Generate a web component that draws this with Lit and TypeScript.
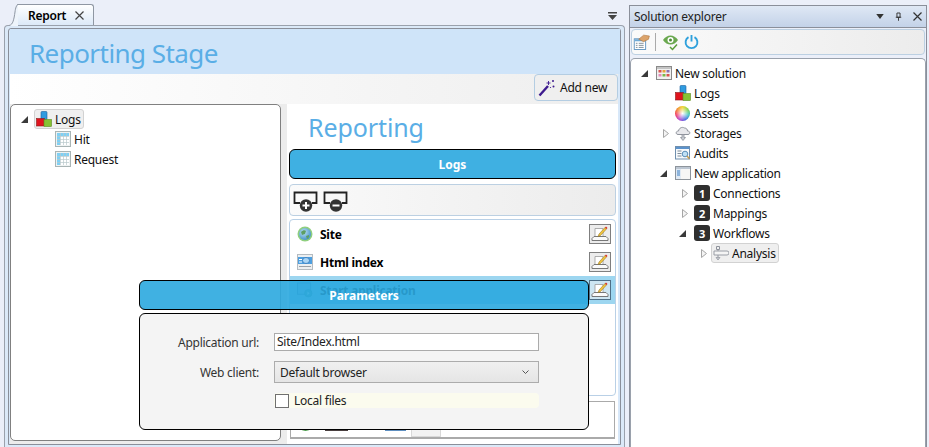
import { LitElement, html, css, TemplateResult } from "lit";
import { customElement } from "lit/decorators.js";

const blocks = html`<svg class="ic" width="16" height="16" viewBox="0 0 16 16">
  <rect x="5" y="0.500" width="6" height="8" rx="1" fill="#2f9be0" stroke="#1b5f9e" stroke-width=".6"/>
  <rect x="0.500" y="7.500" width="8" height="7.500" fill="#e0141e" stroke="#8c1a1a" stroke-width=".6"/>
  <rect x="8" y="8.500" width="7.500" height="7" fill="#86c232" stroke="#5a8a20" stroke-width=".6"/>
</svg>`;

const table = html`<svg class="ic" width="16" height="16" viewBox="0 0 16 16">
  <rect x="0.500" y="0.500" width="15" height="15" fill="#eef2f2" stroke="#a9b5b5"/>
  <rect x="2" y="2" width="12" height="12" fill="#fff"/>
  <rect x="2" y="2" width="12" height="3" fill="#7fd0f4"/>
  <rect x="2" y="2" width="3" height="12" fill="#7fd0f4"/>
  <path d="M2 5.500h12M2 8.500h12M2 11.500h12M5.500 2v12M8.500 2v12M11.500 2v12" stroke="#b9c8cb" stroke-width=".7" fill="none"/>
</svg>`;

const solution = html`<svg class="ic" width="16" height="16" viewBox="0 0 16 16">
  <rect x="0.500" y="1.500" width="15" height="13" fill="#f1f1f1" stroke="#8a8a8a"/>
  <rect x="1" y="2" width="14" height="2" fill="#c4c4c4"/>
  <rect x="2.500" y="5" width="3" height="2.500" fill="#d9534f"/><rect x="6.500" y="5" width="3" height="2.500" fill="#e9a23b"/><rect x="10.500" y="5" width="3" height="2.500" fill="#8a6fb0"/>
  <rect x="2.500" y="9" width="3" height="2.500" fill="#e58ab8"/><rect x="6.500" y="9" width="3" height="2.500" fill="#7ab648"/><rect x="10.500" y="9" width="3" height="2.500" fill="#d9534f"/>
</svg>`;

const cloud = html`<svg class="ic" width="16" height="16" viewBox="0 0 16 16">
  <path d="M3 9.500C.5 9.500.5 6 3.500 6 4 3 7 1.500 9.500 3c2 0 3 1.500 3 3 3 0 3 3.500.5 3.500z" fill="#e8e8ec" stroke="#8f939c"/>
  <path d="M7 9.500v3H5.500L8 15.500l2.500-3H9v-3z" fill="#c9ccd2" stroke="#8f939c" stroke-width=".8"/>
</svg>`;

const audits = html`<svg class="ic" width="16" height="16" viewBox="0 0 16 16">
  <rect x="0.500" y="1.500" width="14" height="12.500" fill="#f7fafc" stroke="#6f8fae"/>
  <rect x="1" y="2" width="13" height="2" fill="#5c93cc"/>
  <path d="M2.500 6h4M2.500 8.500h4M2.500 11h4" stroke="#7d8b99"/>
  <circle cx="10" cy="9" r="2.800" fill="#bfe0f5" stroke="#5b8fb8"/>
  <path d="M12 11l2.500 2.800" stroke="#c59a4a" stroke-width="1.500"/>
</svg>`;

const app = html`<svg class="ic" width="16" height="16" viewBox="0 0 16 16">
  <rect x="0.500" y="1.500" width="15" height="13" fill="#f6f6f6" stroke="#8d949c"/>
  <rect x="1" y="2" width="14" height="2" fill="#bcc6d2"/>
  <rect x="1" y="4" width="5" height="10" fill="#dfe9f4"/>
  <path d="M2 6h3M2 8h3M2 10h3" stroke="#3b7fc4"/>
</svg>`;

const flow = html`<svg class="ic" width="16" height="16" viewBox="0 0 16 16">
  <path d="M3.500 1.500h3v3h-3zM5 4.500V12" stroke="#8f939c" fill="#f1f1f1"/>
  <path d="M1 6h13a1.500 1.500 0 0 1 0 4H1z" fill="#f4f4f4" stroke="#9a9ea6"/>
  <path d="M3 12.500h4L5 15z" fill="#c9ccd2" stroke="#8f939c" stroke-width=".7"/>
</svg>`;

const wheel = html`<span class="wheel"></span>`;

const badge = (n: number) => html`<span class="num">${n}</span>`;

const globe = html`<svg class="ic" width="16" height="16" viewBox="0 0 16 16">
  <defs><radialGradient id="gl" cx=".4" cy=".35" r=".7"><stop offset="0" stop-color="#bfe3f5"/><stop offset="1" stop-color="#3f8fc6"/></radialGradient></defs>
  <circle cx="8" cy="8" r="7.500" fill="#8fcf7e"/>
  <circle cx="8" cy="8" r="6" fill="url(#gl)"/>
  <path d="M4 6c2-2 4-2 5-1l-1 3-3 1zM9 10l3-1 0 2-2 2z" fill="#5d9e63"/>
</svg>`;

const htmlIdx = html`<svg class="ic" width="16" height="16" viewBox="0 0 16 16">
  <rect x="0.500" y="0.500" width="15" height="15" fill="#eceff1" stroke="#b5bbc0"/>
  <rect x="1" y="3" width="14" height="7" fill="#4d9fe0"/>
  <ellipse cx="9" cy="6.500" rx="3.500" ry="3" fill="#a9d5f5" stroke="#2d6fb0" stroke-width=".7"/>
  <path d="M2 5.500h3M2 8h3" stroke="#fff"/>
  <path d="M2 12.500h12" stroke="#9aa1a8"/>
</svg>`;

const startApp = html`<svg class="ic" width="16" height="16" viewBox="0 0 17 16">
  <rect x="0.500" y="0.500" width="14" height="12" fill="#8cc3e4" stroke="#4a7fa8"/>
  <circle cx="12" cy="11.500" r="4" fill="#4aa3a8" stroke="#2e7f8a" stroke-width=".6"/>
  <path d="M11 9.500l2.500 2-2.500 2z" fill="#cfeef0"/>
</svg>`;

const editIcon = html`<svg width="18" height="16" viewBox="0 0 18 16">
  <path d="M4 2.500h8v8H4z" fill="#fff" stroke="#9a9a9a" stroke-width=".8"/>
  <path d="M1 14.500h16v-2l-2-2H3l-2 2z" fill="#fafafa" stroke="#777"/>
  <path d="M7 10.500l1-2.500 6-6.500 1.500 1.500-6 6.500z" fill="#f2c53d" stroke="#8a6a1a" stroke-width=".5"/>
  <path d="M14 1.500l1.500 1.500 1-1-1.500-1.500z" fill="#d9281e"/>
</svg>`;

const wand = html`<svg width="18" height="18" viewBox="0 0 18 18">
  <path d="M1.500 16.500L10 7" stroke="#3d1a8e" stroke-width="2.400"/>
  <path d="M10.500 2v4M8.500 4h4" stroke="#3d1a8e" stroke-width=".9"/>
  <circle cx="15" cy="2" r="1" fill="#3d1a8e"/><circle cx="15.500" cy="7.500" r="1" fill="#3d1a8e"/><circle cx="12.500" cy="8.500" r=".6" fill="#3d1a8e"/>
</svg>`;

const addScreen = (minus: boolean) => html`<svg width="25" height="22" viewBox="0 0 25 22">
  <path d="M7 12H1.500V1.500h22V12H19" fill="none" stroke="#222" stroke-width="1.800"/>
  <circle cx="13" cy="14.500" r="6.200" fill="#333"/>
  <path d="${minus ? "M9.500 14.500h7" : "M9.500 14.500h7M13 11v7"}" stroke="#fff" stroke-width="2"/>
</svg>`;

const reportIcon = html`<svg width="18" height="17" viewBox="0 0 22 20">
  <rect x="1.500" y="5.500" width="14" height="13" fill="#fff" stroke="#4c86b8"/>
  <rect x="2" y="6" width="13" height="2.500" fill="#6faad6"/>
  <path d="M3.500 11h2M7 11h6M3.500 13.500h2M7 13.500h6M3.500 16h2M7 16h6" stroke="#6a7a88"/>
  <path d="M7 6l6-5 7 1-1 4-6 3z" fill="#dca36a" stroke="#a8703a" stroke-width=".7"/>
</svg>`;

const eye = html`<svg width="17" height="17" viewBox="0 0 17 17">
  <path d="M1 6c4-6 11-6 15 0-4 6-11 6-15 0z" fill="#6aa84f"/>
  <circle cx="8.500" cy="6" r="3" fill="#fff"/><circle cx="8.500" cy="6" r="1.500" fill="#4e8a36"/>
  <path d="M8 13l2.500 2.500L15 10.500" fill="none" stroke="#5a9e3a" stroke-width="1.500"/>
</svg>`;

const power = html`<svg width="15" height="16" viewBox="0 0 16 17">
  <path d="M4.800 3.300a6.300 6.300 0 1 0 6.400 0" fill="none" stroke="#2ea0dc" stroke-width="2"/>
  <path d="M8 1v7" stroke="#2ea0dc" stroke-width="2"/>
</svg>`;

interface Node { label: string; icon: TemplateResult; depth: number; arrow?: "open" | "closed"; sel?: boolean }

const leftTree: Node[] = [
  { label: "Logs", icon: blocks, depth: 0, arrow: "open", sel: true },
  { label: "Hit", icon: table, depth: 1 },
  { label: "Request", icon: table, depth: 1 },
];

const rightTree: Node[] = [
  { label: "New solution", icon: solution, depth: 0, arrow: "open" },
  { label: "Logs", icon: blocks, depth: 1 },
  { label: "Assets", icon: wheel, depth: 1 },
  { label: "Storages", icon: cloud, depth: 1, arrow: "closed" },
  { label: "Audits", icon: audits, depth: 1 },
  { label: "New application", icon: app, depth: 1, arrow: "open" },
  { label: "Connections", icon: badge(1), depth: 2, arrow: "closed" },
  { label: "Mappings", icon: badge(2), depth: 2, arrow: "closed" },
  { label: "Workflows", icon: badge(3), depth: 2, arrow: "open" },
  { label: "Analysis", icon: flow, depth: 3, arrow: "closed", sel: true },
];

@customElement("app-root")
export class AppRoot extends LitElement {
  static styles = css`
    :host { display: block; width: 929px; height: 447px; overflow: hidden; position: relative; background: #ebeff9;
      font-family: "Noto Sans", "Open Sans", sans-serif; font-size: 12px; letter-spacing: -0.25px; color: #111; }
    * { box-sizing: border-box; }
    .root { display: flex; height: 447px; }
    .doc { width: 625px; display: flex; flex-direction: column; flex: none; }
    .tabs { height: 25px; flex: none; padding: 4px 0 0 17px; display: flex; align-items: flex-start; justify-content: space-between; }
    .tab { position: relative; width: 77px; height: 21px; background: linear-gradient(#ffffff, #dce9f8); border: 1px solid #8f97a3; border-left: none; border-bottom: none; border-radius: 0 3px 0 0;
      display: flex; align-items: center; padding-left: 11px; gap: 9px; font-weight: 600; color: #000; }
    .wedge { position: absolute; left: -8px; top: -1px; }
    .x { width: 9px; height: 9px; flex: none; }
    .drop { margin: 8px 8px 0 0; }
    .outer { margin-left: 4px; flex: 1; background: #dbe9f8; border: 1px solid #9aa1ac; border-bottom: none; border-radius: 4px 4px 0 0; padding: 2px 3px 0 3px; display: flex; min-height: 0; }
    .inner { flex: 1; border: 1px solid #8a8f9a; border-radius: 3px 3px 0 0; padding: 0 0 0 1px; background: #d8e8f9; display: flex; flex-direction: column; min-width: 0; height: 417px; }
    .hero { height: 45px; flex: none; background: #cfe4f9; color: #5aaee6; font-size: 26px; letter-spacing: -0.55px; line-height: 49px; padding-left: 19px; }
    .bar { height: 30px; width: 608px; flex: none; background: linear-gradient(90deg, #ffffff, #eeeeee); display: flex; justify-content: flex-end; align-items: flex-start; }
    .add { width: 84px; height: 27px; border: 1px solid #b4cde2; border-radius: 4px; background: #efefef; display: flex; align-items: center; gap: 4px; padding-left: 3px; color: #111; }
    .cols { flex: 1; width: 608px; display: flex; min-height: 0; background: #ececec; }
    .treebox { width: 271px; flex: none; height: 337px; background: #fff; border: 1px solid #808080; border-radius: 5px; padding: 4px 0 0 9px; }
    .content { width: 331px; margin-left: 6px; flex: none; background: #fff; padding: 0 2px; display: flex; flex-direction: column; }
    h2 { margin: 0; font-weight: 400; font-size: 25px; line-height: 46px; letter-spacing: -0.1px; color: #5aaee6; padding-left: 19px; height: 45px; flex: none; }
    .head { height: 30px; flex: none; background: #3fb0e2; color: #fff; font-weight: 700; letter-spacing: 0; border: 1px solid #000; border-radius: 6px; display: flex; align-items: center; justify-content: center; }
    .tools { margin-top: 5px; height: 32px; flex: none; border: 1px solid #bcd0e2; border-radius: 4px; background: linear-gradient(90deg, #fafafa, #ececec); display: flex; align-items: center; gap: 5px; padding: 3px 0 0 3px; }
    .list { margin-top: 3px; height: 177px; flex: none; border: 1px solid #b9d0e6; border-radius: 4px; display: flex; flex-direction: column; }
    .item { height: 28px; flex: none; display: flex; align-items: center; padding: 0 4px 0 7px; font-weight: 700; color: #000; gap: 7px; }
    .item.on { background: #9dd6f0; }
    .item span.t { flex: 1; }
    .edit { width: 22px; height: 20px; border: 1px solid #7f7f7f; background: #ececec; display: flex; align-items: center; justify-content: center; flex: none; }
    .item.on .edit { background: #cde6f2; border-color: #4f6f86; }
    .foot { margin: 5px 1px 0 1px; height: 38px; flex: none; border: 1px solid #aaa; border-bottom-width: 2px; display: flex; align-items: flex-start; padding-top: 4px; }
    .foot i { display: block; flex: none; height: 25px; }
    .f1 { width: 17px; margin-left: 6px; background: #4a9c4a; border-radius: 0 0 9px 9px; }
    .f2 { width: 23px; margin-left: 11px; background: #4a4040; }
    .f3 { width: 21px; margin-left: 37px; background: #5f8fc0; }
    .f4 { width: 30px; height: 31px !important; margin-left: 5px; background: #f2f2f2; border: 1px solid #d8d8d8; }

    .side { flex: none; width: 300px; margin-left: 4px; padding: 5px 0 0 0; display: flex; flex-direction: column; }
    .side-in { flex: 1; border: 1px solid #8a8f9a; border-bottom: none; display: flex; flex-direction: column; background: #ebeff9; width: 298px; min-height: 0; }
    .cap { height: 22px; flex: none; background: linear-gradient(#dfe8f5, #c3d2e8); border-bottom: 1px solid #8a8f9a; display: flex; align-items: center; padding: 0 4px 0 4px; color: #222; }
    .cap span { flex: 1; }
    .cap svg { margin-left: 11px; }
    .tb { height: 26px; flex: none; margin: 1px 1px 0 1px; border: 1px solid #bcd0e2; border-radius: 4px; background: linear-gradient(90deg, #fafafa, #ececec); display: flex; align-items: center; padding: 0 0 0 1px; }
    .sep { width: 1px; height: 18px; background: #aaa; margin: 0 6px 0 4px; }
    .tb svg + svg { margin-left: 5px; }
    .rtree { flex: 1; margin-top: 3px; background: #fff; border: 1px solid #9aa1ac; border-bottom: none; border-radius: 5px 5px 0 0; padding: 4px 0 0 9px; }

    .row { height: 20px; display: flex; align-items: center; }
    .arr { width: 14px; height: 10px; flex: none; display: flex; align-items: center; }
    .arr.open { padding-left: 1px; }
    .arr.closed { padding-left: 4px; }
    .lab { display: flex; align-items: center; height: 20px; gap: 3px; padding: 0 2px 0 1px; border: 1px solid transparent; border-radius: 3px; }
    .lab.sel { background: #efefef; border-color: #d2d2d2; }
    .ic { flex: none; display: block; }
    .wheel { display: block; width: 15px; height: 15px; border-radius: 50%; flex: none; margin-right: 1px;
      background: radial-gradient(circle at 50% 50%, #ffffff 0, #ffffff00 70%), conic-gradient(#f0d020, #7ed040, #30c0c0, #4060e0, #b040d0, #f03060, #f08020, #f0d020); }
    .num { display: flex; width: 16px; height: 16px; border-radius: 3px; background: #2f2f2f; color: #fff; font-weight: 700; font-size: 11px; align-items: center; justify-content: center; flex: none; }

    .over { position: absolute; left: 139px; top: 280px; width: 450px; }
    .phead { height: 30px; background: rgba(43, 168, 223, .9); border: 1px solid #000; border-radius: 6px; color: #fff; font-weight: 700; letter-spacing: 0; display: flex; align-items: center; justify-content: center; }
    .pbody { margin-top: 3px; height: 117px; background: #f4f4f4; border: 1px solid #000; border-radius: 6px; padding: 19px 0 0 0; display: grid; grid-template-columns: 119px 265px; column-gap: 15px; row-gap: 10px; align-content: start; grid-auto-rows: min-content; color: #333; }
    .pl { text-align: right; align-self: center; }
    .input { height: 18px; border: 1px solid #ababab; background: #fff; padding-left: 2px; line-height: 16px; color: #222; }
    .select { height: 22px; border: 1px solid #acacac; background: linear-gradient(#f0f0f0, #e5e5e5); padding: 0 9px 0 5px; display: flex; align-items: center; justify-content: space-between; color: #222; }
    .check { grid-column: 2; height: 15px; background: #fbfbee; border-radius: 4px; display: flex; align-items: center; gap: 5px; color: #222; }
    .box { width: 14px; height: 14px; margin-left: 1px; background: #fff; border: 1px solid #707070; flex: none; }
  `;

  private node(n: Node) {
    return html`<div class="row" style="padding-left:${n.depth * 19}px">
      <span class="arr ${n.arrow ?? ""}">${n.arrow === "open"
        ? html`<svg width="7" height="7" viewBox="0 0 7 7"><path d="M7 0v7H0z" fill="#3a3a3a"/></svg>`
        : n.arrow === "closed"
          ? html`<svg width="6" height="9" viewBox="0 0 6 9"><path d="M.5.500l5 4-5 4z" fill="#f4f4f4" stroke="#a6a6a6"/></svg>`
          : ""}</span>
      <span class="lab ${n.sel ? "sel" : ""}">${n.icon}<span>${n.label}</span></span>
    </div>`;
  }

  render() {
    return html`<div class="root">
      <div class="doc">
        <div class="tabs">
          <div class="tab">
            <svg class="wedge" width="9" height="22" viewBox="0 0 9 22"><path d="M0 21.500C4 21 5 15 6 8 6.500 4 7.500 1 9 .5V22H0z" fill="#eef4fb"/><path d="M0 21.500C4 21 5 15 6 8 6.500 4 7.500 1 9 .5" fill="none" stroke="#8f97a3"/></svg>
            Report
            <svg class="x" viewBox="0 0 9 9"><path d="M.5.500l8 8M8.500.500l-8 8" stroke="#444" stroke-width="1.200"/></svg>
          </div>
          <svg class="drop" width="9" height="8" viewBox="0 0 9 8"><path d="M0 0h9v1.500H0zM0 3h9L4.500 8z" fill="#444"/></svg>
        </div>
        <div class="outer"><div class="inner">
          <div class="hero">Reporting Stage</div>
          <div class="bar"><div class="add">${wand}<span>Add new</span></div></div>
          <div class="cols">
            <div class="treebox">${leftTree.map((n) => this.node(n))}</div>
            <div class="content">
              <h2>Reporting</h2>
              <div class="head">Logs</div>
              <div class="tools">${addScreen(false)}${addScreen(true)}</div>
              <div class="list">
                <div class="item">${globe}<span class="t">Site</span><span class="edit">${editIcon}</span></div>
                <div class="item">${htmlIdx}<span class="t">Html index</span><span class="edit">${editIcon}</span></div>
                <div class="item on">${startApp}<span class="t">Start application</span><span class="edit">${editIcon}</span></div>
              </div>
              <div class="foot"><i class="f1"></i><i class="f2"></i><i class="f3"></i><i class="f4"></i></div>
            </div>
          </div>
        </div></div>
      </div>
      <div class="side"><div class="side-in">
        <div class="cap"><span>Solution explorer</span>
          <svg width="8" height="5" viewBox="0 0 9 6"><path d="M0 0h9L4.500 6z" fill="#333"/></svg>
          <svg width="7" height="11" viewBox="0 0 9 11"><path d="M2.500 1h4v5.500h-4zM1 6.500h7M4.500 6.500V11" fill="none" stroke="#333" stroke-width="1.200"/></svg>
          <svg width="9" height="9" viewBox="0 0 9 9"><path d="M.5.500l8 8M8.500.500l-8 8" stroke="#333" stroke-width="1.200"/></svg>
        </div>
        <div class="tb">${reportIcon}<span class="sep"></span>${eye}${power}</div>
        <div class="rtree">${rightTree.map((n) => this.node(n))}</div>
      </div></div>
    </div>
    <div class="over">
      <div class="phead">Parameters</div>
      <div class="pbody">
        <div class="pl">Application url:</div><div class="input">Site/Index.html</div>
        <div class="pl">Web client:</div>
        <div class="select">Default browser
          <svg width="7" height="5" viewBox="0 0 7 5"><path d="M.5.500l3 3 3-3" fill="none" stroke="#555"/></svg>
        </div>
        <div class="check"><span class="box"></span>Local files</div>
      </div>
    </div>`;
  }
}
